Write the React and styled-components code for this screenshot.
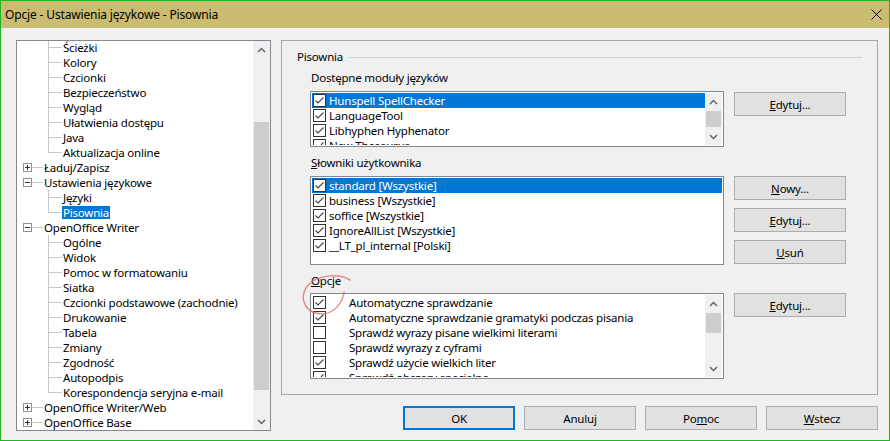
import React from "react";
import styled, { createGlobalStyle } from "styled-components";

const FONT = `"Noto Sans", "Open Sans", sans-serif`;

const GlobalStyle = createGlobalStyle`
  html, body { margin: 0; padding: 0; background: #f0f0f0; }
  body { font-family: ${FONT}; font-size: 11.5px; letter-spacing: -0.2px; color: #000; }
  *, *::before, *::after { box-sizing: border-box; }
`;

const Window = styled.div`
  position: relative;
  width: 890px;
  height: 441px;
  border: 1px solid #22b422;
  background: #f0f0f0;
  display: flex;
  flex-direction: column;
  overflow: hidden;
`;

const TitleBar = styled.div`
  height: 27px;
  flex: none;
  background: #cabc70;
  display: flex;
  align-items: center;
  justify-content: space-between;
  padding: 0 7px 1px 4px;
  font-size: 12px;
  letter-spacing: -0.15px;
`;

const Body = styled.div`
  flex: 1;
  display: flex;
  padding: 12px 11px 0 15px;
`;

const TreeBox = styled.div`
  width: 255px;
  height: 391px;
  border: 1px solid #828790;
  background: #fff;
  display: flex;
  overflow: hidden;
`;

const TreeList = styled.div`
  flex: 1;
  display: flex;
  flex-direction: column;
  margin-top: -1px;
  overflow: hidden;
`;

const TreeRow = styled.div`
  height: 15px;
  flex: none;
  display: flex;
  align-items: center;
  white-space: nowrap;
  line-height: 13px;
`;

const Branch = styled.span`
  position: relative;
  width: 14px;
  height: 15px;
  margin-left: 31px;
  flex: none;
  &::before {
    content: "";
    position: absolute;
    left: 0;
    top: 0;
    height: ${(p) => (p.$last ? "8px" : "15px")};
    border-left: 1px solid #c8c8c8;
  }
  &::after {
    content: "";
    position: absolute;
    left: 0;
    right: 0;
    top: 7px;
    border-top: 1px solid #c8c8c8;
  }
`;

const Expander = styled.span`
  position: relative;
  width: 9px;
  height: 9px;
  margin-left: 6px;
  flex: none;
  border: 1px solid #919191;
  background: #fff;
  &::before {
    content: "";
    position: absolute;
    left: 1px;
    top: 3px;
    width: 5px;
    border-top: 1px solid #333;
  }
  &::after {
    content: "";
    display: ${(p) => (p.$open ? "none" : "block")};
    position: absolute;
    left: 3px;
    top: 1px;
    height: 5px;
    border-left: 1px solid #333;
  }
`;

const Stub = styled.span`
  width: 11px;
  flex: none;
  border-top: 1px solid #c8c8c8;
`;

const TreeLabel = styled.span`
  padding: 0 1px;
  line-height: 13px;
  background: ${(p) => (p.$selected ? "#0078d7" : "transparent")};
  color: ${(p) => (p.$selected ? "#fff" : "#000")};
`;

const ScrollBar = styled.div`
  width: 17px;
  flex: none;
  background: #f0f0f0;
  display: flex;
  flex-direction: column;
`;

const ScrollArrow = styled.div`
  height: 17px;
  flex: none;
  display: flex;
  align-items: center;
  justify-content: center;
`;

const ScrollTrack = styled.div`
  flex: 1;
  display: flex;
  flex-direction: column;
`;

const Thumb = styled.div`
  margin: ${(p) => p.$top}px 1px 0 1px;
  height: ${(p) => p.$size}px;
  background: #cdcdcd;
`;

const RightCol = styled.div`
  margin-left: 10px;
  width: 597px;
  display: flex;
  flex-direction: column;
`;

const Frame = styled.div`
  height: 355px;
  border: 1px solid #a8a8a8;
  padding: 8px 15px 0 15px;
  display: flex;
  flex-direction: column;
`;

const FrameHeader = styled.div`
  display: flex;
  align-items: center;
  gap: 6px;
  line-height: 16px;
  &::after {
    content: "";
    flex: 1;
    border-top: 1px solid #d0d0d0;
  }
`;

const Section = styled.div`
  margin: ${(p) => p.$top}px 0 0 13px;
  display: flex;
  flex-direction: column;
`;

const SectionLabel = styled.div`
  line-height: 16px;
  padding-left: 1px;
  margin-bottom: ${(p) => p.$gap ?? 5}px;
`;

const SectionRow = styled.div`
  display: flex;
  align-items: flex-start;
  gap: 10px;
`;

const ListBox = styled.div`
  width: 414px;
  height: ${(p) => p.$height}px;
  flex: none;
  border: 1px solid #828790;
  background: #fff;
  padding: 1px;
  display: flex;
  overflow: hidden;
`;

const ListRows = styled.div`
  flex: 1;
  display: flex;
  flex-direction: column;
  overflow: hidden;
`;

const ListRow = styled.div`
  height: 15px;
  flex: none;
  display: flex;
  align-items: center;
  padding-left: 1px;
  line-height: 13px;
  white-space: nowrap;
  background: ${(p) => (p.$selected ? "#0078d7" : "transparent")};
  color: ${(p) => (p.$selected ? "#fff" : "#000")};
`;

const Box = styled.span`
  width: 13px;
  height: 13px;
  flex: none;
  border: 1px solid #333;
  background: #fff;
  display: flex;
  align-items: center;
  justify-content: center;
  margin-right: ${(p) => p.$gap}px;
`;

const ButtonCol = styled.div`
  display: flex;
  flex-direction: column;
  gap: 8px;
  padding-top: ${(p) => p.$offset ?? 0}px;
`;

const Button = styled.button`
  width: 112px;
  height: 24px;
  padding: 0;
  font-family: ${FONT};
  font-size: 11.5px;
  letter-spacing: -0.2px;
  color: #000;
  background: #e1e1e1;
  border: ${(p) => (p.$default ? "2px solid #0078d7" : "1px solid #adadad")};
  display: flex;
  align-items: center;
  justify-content: center;
`;

const ButtonRow = styled.div`
  margin-top: 11px;
  display: flex;
  justify-content: flex-end;
  gap: 9px;
`;

const Annotation = styled.svg`
  position: absolute;
  left: 0;
  top: 0;
  pointer-events: none;
`;

const Chevron = ({ up }) => (
  <svg width="9" height="6" viewBox="0 0 9 6">
    <polyline
      points={up ? "1,5 4.5,1.5 8,5" : "1,1 4.5,4.5 8,1"}
      fill="none"
      stroke="#606060"
      strokeWidth="1.4"
    />
  </svg>
);

const Scroll = ({ top, size }) => (
  <ScrollBar>
    <ScrollArrow>
      <Chevron up />
    </ScrollArrow>
    <ScrollTrack>
      <Thumb $top={top} $size={size} />
    </ScrollTrack>
    <ScrollArrow>
      <Chevron />
    </ScrollArrow>
  </ScrollBar>
);

const Check = ({ checked, gap }) => (
  <Box $gap={gap}>
    {checked && (
      <svg width="11" height="11" viewBox="0 0 11 11">
        <polyline points="1.5,5.5 4,8 9.5,2.5" fill="none" stroke="#444" strokeWidth="1.1" />
      </svg>
    )}
  </Box>
);

const tree = [
  { l: 2, t: "Ścieżki" },
  { l: 2, t: "Kolory" },
  { l: 2, t: "Czcionki" },
  { l: 2, t: "Bezpieczeństwo" },
  { l: 2, t: "Wygląd" },
  { l: 2, t: "Ułatwienia dostępu" },
  { l: 2, t: "Java" },
  { l: 2, t: "Aktualizacja online", last: true },
  { l: 1, t: "Ładuj/Zapisz" },
  { l: 1, t: "Ustawienia językowe", open: true },
  { l: 2, t: "Języki" },
  { l: 2, t: "Pisownia", last: true, sel: true },
  { l: 1, t: "OpenOffice Writer", open: true },
  { l: 2, t: "Ogólne" },
  { l: 2, t: "Widok" },
  { l: 2, t: "Pomoc w formatowaniu" },
  { l: 2, t: "Siatka" },
  { l: 2, t: "Czcionki podstawowe (zachodnie)" },
  { l: 2, t: "Drukowanie" },
  { l: 2, t: "Tabela" },
  { l: 2, t: "Zmiany" },
  { l: 2, t: "Zgodność" },
  { l: 2, t: "Autopodpis" },
  { l: 2, t: "Korespondencja seryjna e-mail", last: true },
  { l: 1, t: "OpenOffice Writer/Web" },
  { l: 1, t: "OpenOffice Base" },
];

const modules = [
  { t: "Hunspell SpellChecker", sel: true },
  { t: "LanguageTool" },
  { t: "Libhyphen Hyphenator" },
  { t: "New Thesaurus" },
];

const dicts = [
  { t: "standard [Wszystkie]", sel: true },
  { t: "business [Wszystkie]" },
  { t: "soffice [Wszystkie]" },
  { t: "IgnoreAllList [Wszystkie]" },
  { t: "__LT_pl_internal [Polski]" },
];

const options = [
  { t: "Automatyczne sprawdzanie", c: true },
  { t: "Automatyczne sprawdzanie gramatyki podczas pisania", c: true },
  { t: "Sprawdź wyrazy pisane wielkimi literami", c: false },
  { t: "Sprawdź wyrazy z cyframi", c: false },
  { t: "Sprawdź użycie wielkich liter", c: true },
  { t: "Sprawdź obszary specjalne", c: true },
];

const Mn = ({ k, rest, pre = "" }) => (
  <span>
    {pre}
    <u>{k}</u>
    {rest}
  </span>
);

export default function App() {
  return (
    <>
      <GlobalStyle />
      <Window>
        <TitleBar>
          <span>Opcje - Ustawienia językowe - Pisownia</span>
          <svg width="11" height="11" viewBox="0 0 11 11">
            <path d="M0.5 0.5 L10.5 10.5 M10.5 0.5 L0.5 10.5" stroke="#000" strokeWidth="1" />
          </svg>
        </TitleBar>
        <Body>
          <TreeBox>
            <TreeList>
              {tree.map((n) => (
                <TreeRow key={n.t}>
                  {n.l === 1 ? (
                    <>
                      <Expander $open={n.open} />
                      <Stub />
                    </>
                  ) : (
                    <Branch $last={n.last} />
                  )}
                  <TreeLabel $selected={n.sel}>{n.t}</TreeLabel>
                </TreeRow>
              ))}
            </TreeList>
            <Scroll top={64} size={268} />
          </TreeBox>
          <RightCol>
            <Frame>
              <FrameHeader>Pisownia</FrameHeader>
              <Section $top={5}>
                <SectionLabel>Dostępne moduły języków</SectionLabel>
                <SectionRow>
                  <ListBox $height={56}>
                    <ListRows>
                      {modules.map((m) => (
                        <ListRow key={m.t} $selected={m.sel}>
                          <Check checked gap={3} />
                          {m.t}
                        </ListRow>
                      ))}
                    </ListRows>
                    <Scroll top={1} size={16} />
                  </ListBox>
                  <ButtonCol $offset={1}>
                    <Button>
                      <Mn k="E" rest="dytuj..." />
                    </Button>
                  </ButtonCol>
                </SectionRow>
              </Section>
              <Section $top={8}>
                <SectionLabel>
                  <Mn k="S" rest="łowniki użytkownika" />
                </SectionLabel>
                <SectionRow>
                  <ListBox $height={89}>
                    <ListRows>
                      {dicts.map((m) => (
                        <ListRow key={m.t} $selected={m.sel}>
                          <Check checked gap={3} />
                          {m.t}
                        </ListRow>
                      ))}
                    </ListRows>
                  </ListBox>
                  <ButtonCol>
                    <Button>
                      <Mn k="N" rest="owy..." />
                    </Button>
                    <Button>
                      <Mn k="E" rest="dytuj..." />
                    </Button>
                    <Button>
                      <Mn k="U" rest="suń" />
                    </Button>
                  </ButtonCol>
                </SectionRow>
              </Section>
              <Section $top={8}>
                <SectionLabel $gap={4}>
                  <Mn k="O" rest="pcje" />
                </SectionLabel>
                <SectionRow>
                  <ListBox $height={86}>
                    <ListRows>
                      {options.map((m) => (
                        <ListRow key={m.t}>
                          <Check checked={m.c} gap={23} />
                          {m.t}
                        </ListRow>
                      ))}
                    </ListRows>
                    <Scroll top={1} size={20} />
                  </ListBox>
                  <ButtonCol>
                    <Button>
                      <Mn k="E" rest="dytuj..." />
                    </Button>
                  </ButtonCol>
                </SectionRow>
              </Section>
            </Frame>
            <ButtonRow>
              <Button $default>OK</Button>
              <Button>Anuluj</Button>
              <Button>
                <Mn pre="Po" k="m" rest="oc" />
              </Button>
              <Button>
                <Mn k="W" rest="stecz" />
              </Button>
            </ButtonRow>
          </RightCol>
        </Body>
        <Annotation width="890" height="441" viewBox="0 0 890 441">
          <path
            d="M349 279 C 338 272, 314 273, 305 287 C 298 299, 305 313, 322 313 C 334 312, 342 301, 343 291"
            fill="none"
            stroke="#e06a6a"
            strokeOpacity="0.75"
            strokeWidth="1.5"
            strokeLinecap="round"
          />
        </Annotation>
      </Window>
    </>
  );
}
